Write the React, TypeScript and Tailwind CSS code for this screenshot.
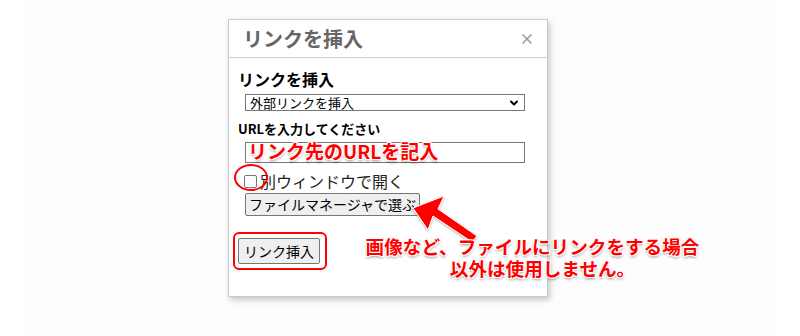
import { ChevronDown, X } from 'lucide-react';

const jp = "font-['Noto_Sans_CJK_JP','Noto_Sans',sans-serif]";
const glow =
  '[text-shadow:1px_1px_0_#fff,-1px_-1px_0_#fff,1px_-1px_0_#fff,-1px_1px_0_#fff,0_2px_3px_rgba(0,0,0,0.45)]';

export default function App() {
  return (
    <div className={`relative h-[336px] w-[800px] overflow-hidden bg-white ${jp}`}>
      <div className="mx-[24px] h-full bg-[#fdfdfd] pl-[204px] pt-[19px]">
        {/* dialog */}
        <div className="relative flex h-[278px] w-[320px] flex-col border border-[#c9c9c9] bg-white shadow-[2px_3px_6px_rgba(0,0,0,0.22)]">
          <div className="flex h-[38px] items-center justify-between border-b border-[#cfcfcf] pl-[14px] pr-[12px]">
            <span className="text-[20px] font-bold text-[#666]">リンクを挿入</span>
            <X className="h-[16px] w-[16px] text-[#999]" strokeWidth={2.5} />
          </div>
          <div className="flex flex-col pl-[9px] pt-[10px]">
            <div className="text-[16px] font-bold leading-[22px] text-black">リンクを挿入</div>
            <div className="ml-[7px] mt-[4px] flex h-[17px] w-[280px] items-center justify-between border border-[#767676] pl-[4px] pr-[4px] text-[13px] leading-none text-black">
              <span>外部リンクを挿入</span>
              <ChevronDown className="h-[12px] w-[12px]" strokeWidth={4} />
            </div>
            <div className="mt-[9px] text-[13px] font-bold leading-[18px] text-black">URLを入力してください</div>
            <div className="relative ml-[7px] mt-[4px] h-[21px] w-[280px] border border-[#767676]">
              <span className={`absolute left-[2px] top-[-6px] whitespace-nowrap text-[19px] font-bold text-[#f00] ${glow}`}>
                リンク先のURLを記入
              </span>
            </div>
            <div className="relative ml-[6px] mt-[10px] flex items-center gap-[3px]">
              <span className="h-[13px] w-[13px] rounded-[2px] border border-[#767676] bg-white" />
              <span className="text-[16px] leading-[16px] text-[#222]">別ウィンドウで開く</span>
              <span className="absolute left-[-10px] top-[-9px] h-[27px] w-[34px] rounded-[50%] border-2 border-[#f00]" />
            </div>
            <div className="ml-[7px] mt-[4px] flex h-[23px] w-[175px] items-center justify-center rounded-[2px] border border-[#767676] bg-[#efefef] text-[14px] text-black">
              ファイルマネージャで選ぶ
            </div>
            <div className="relative mt-[22px] flex h-[26px] w-[82px] items-center justify-center rounded-[2px] border border-[#767676] bg-[#efefef] text-[14px] text-black">
              リンク挿入
              <span className="absolute left-[-6px] top-[-7px] h-[38px] w-[94px] rounded-[6px] border-2 border-[#f00]" />
            </div>
          </div>
        </div>
      </div>

      {/* arrow */}
      <svg className="absolute left-[403px] top-[194px]" width="90" height="60" viewBox="0 0 90 60">
        <defs>
          <filter id="sh" x="-20%" y="-20%" width="140%" height="140%">
            <feDropShadow dx="0" dy="1" stdDeviation="1" floodColor="#000" floodOpacity="0.35" />
          </filter>
        </defs>
        <g filter="url(#sh)">
          <polygon points="10,14 41,2 35,15 74,42 69,48 30,22 25,36" fill="#f00" stroke="#fff" strokeWidth="1" />
        </g>
      </svg>

      {/* note */}
      <div className={`absolute left-[360px] top-[235px] w-[345px] text-center text-[18.6px] font-bold leading-[22px] text-[#f00] ${glow}`}>
        <div className="whitespace-nowrap">画像など、ファイルにリンクをする場合</div>
        <div className="pl-[20px]">以外は使用しません。</div>
      </div>
    </div>
  );
}
